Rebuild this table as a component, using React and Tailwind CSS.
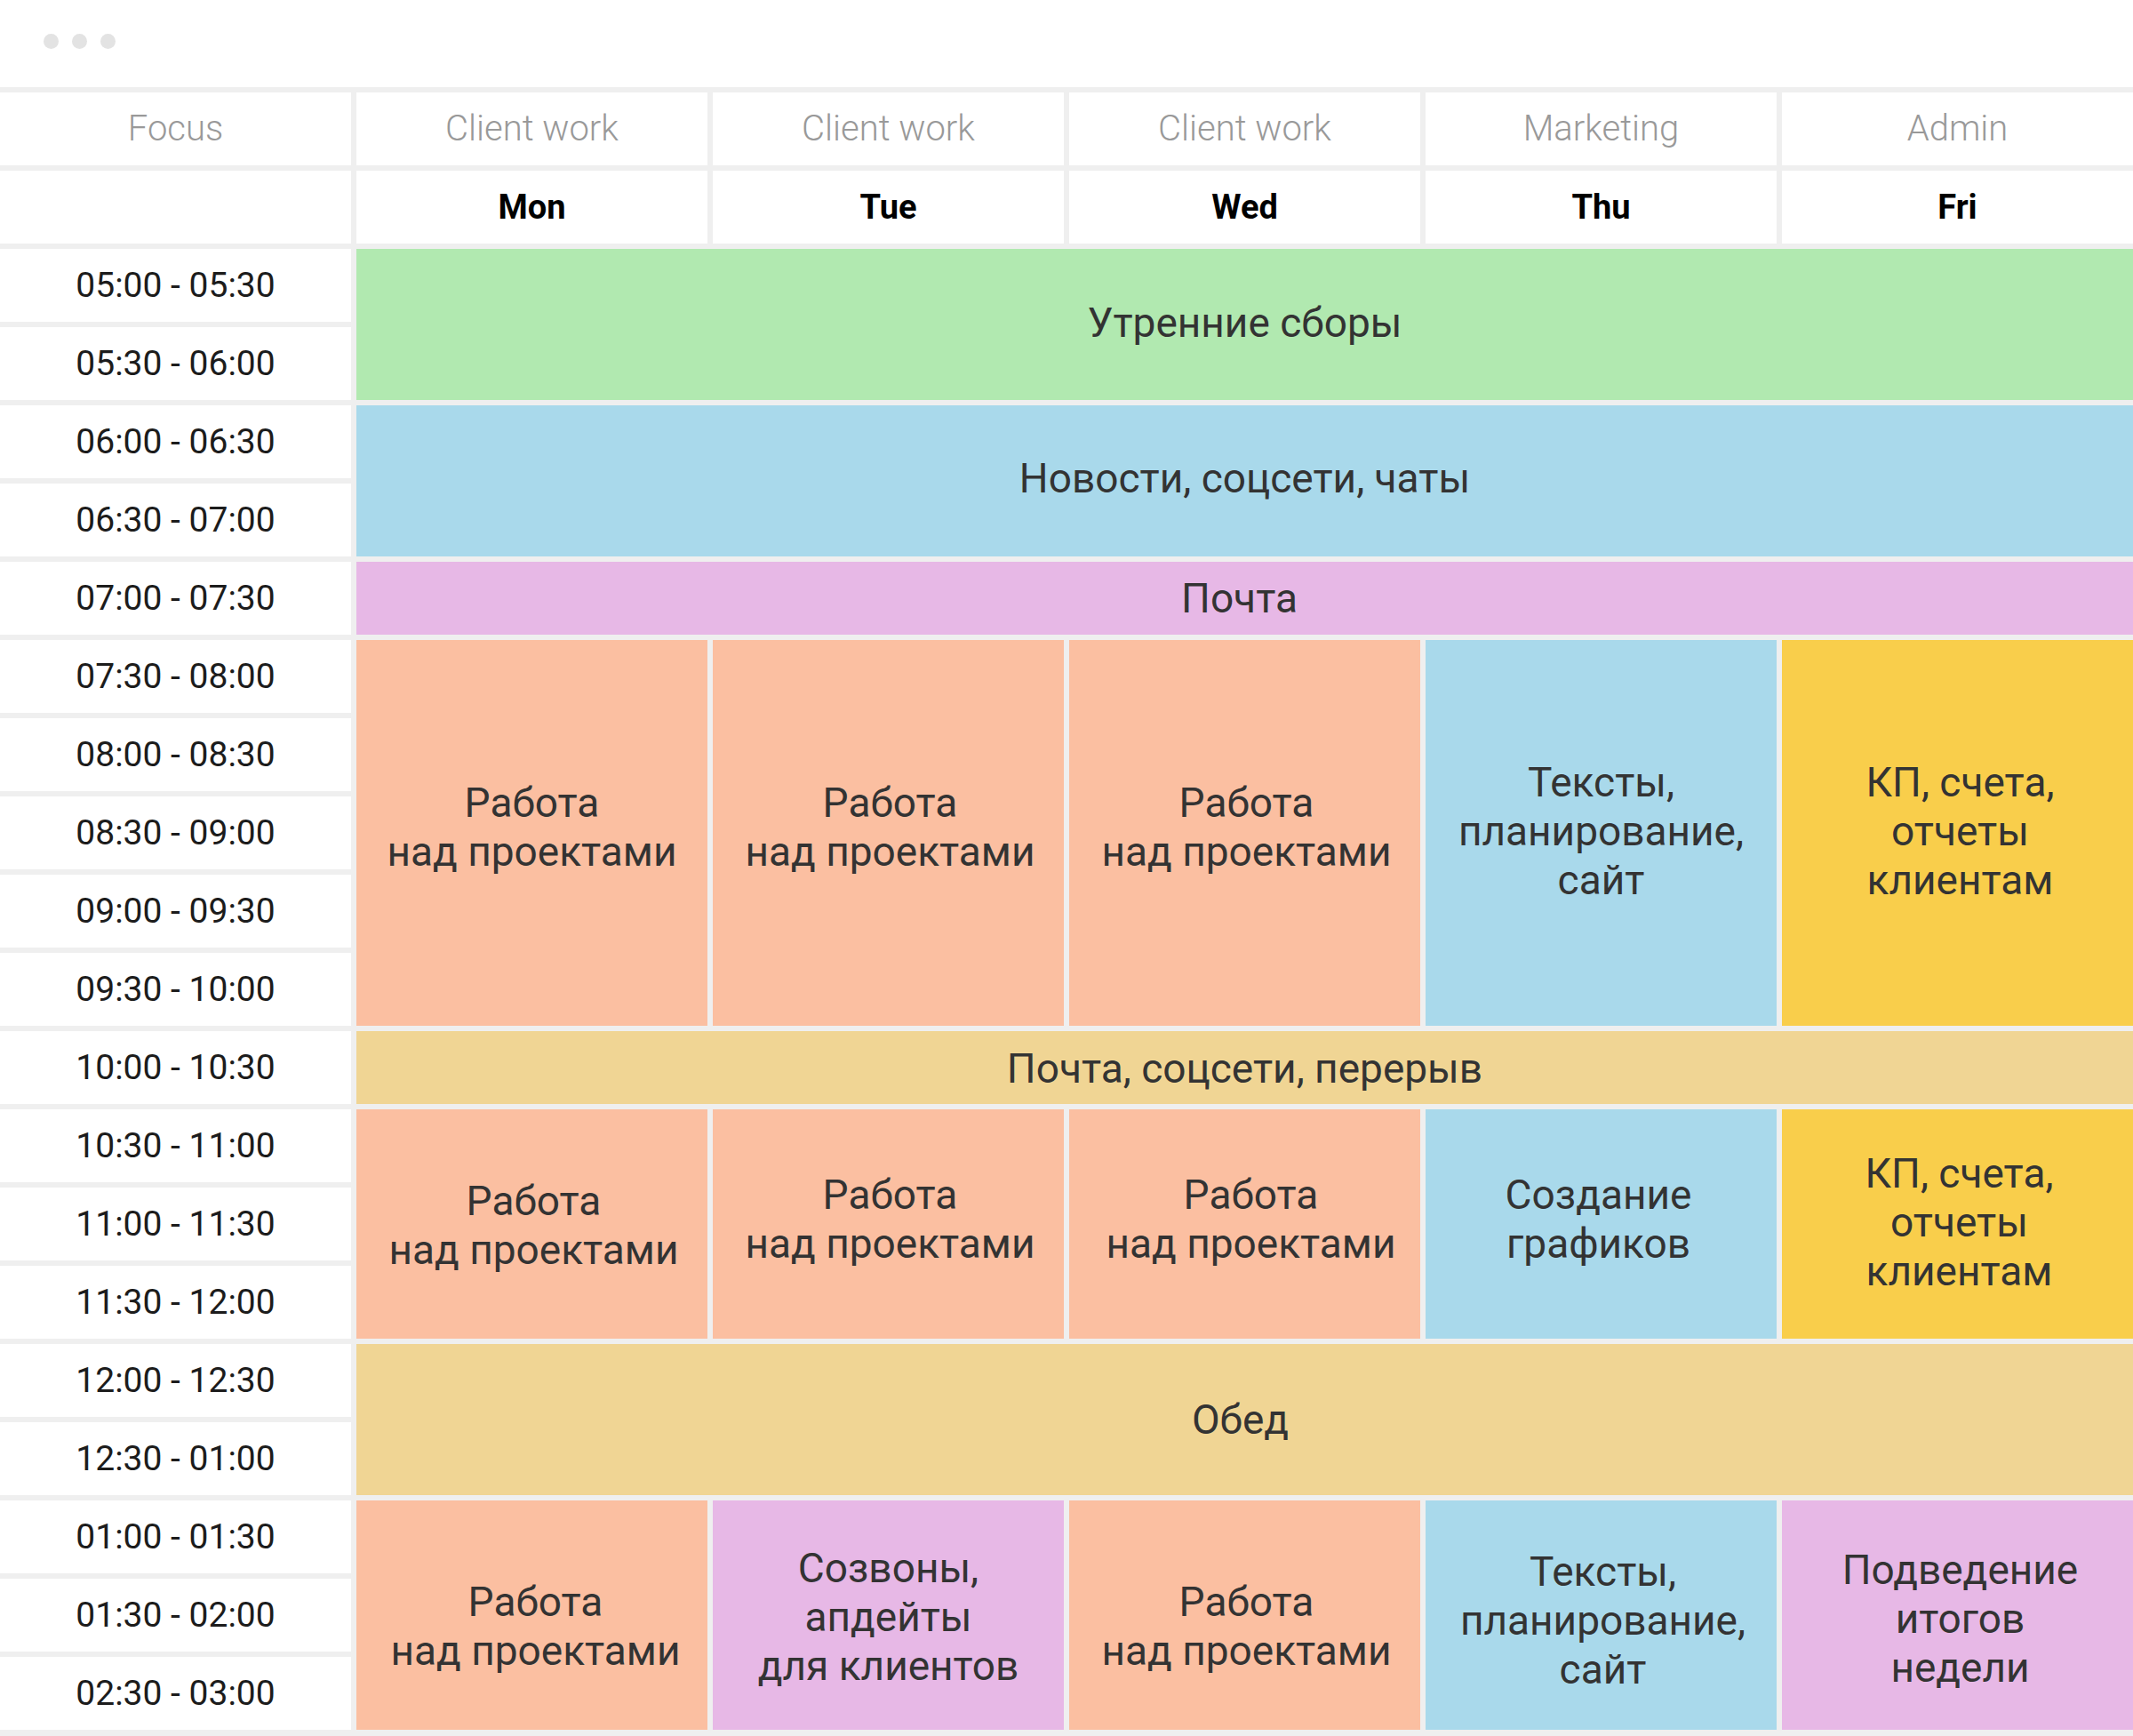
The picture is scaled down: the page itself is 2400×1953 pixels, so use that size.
import React from 'react';

const categories = ['Focus', 'Client work', 'Client work', 'Client work', 'Marketing', 'Admin'];
const days = ['', 'Mon', 'Tue', 'Wed', 'Thu', 'Fri'];

const times = [
    ['05:00 - 05:30', 'row-start-3'],
    ['05:30 - 06:00', 'row-start-4'],
    ['06:00 - 06:30', 'row-start-5'],
    ['06:30 - 07:00', 'row-start-6'],
    ['07:00 - 07:30', 'row-start-7'],
    ['07:30 - 08:00', 'row-start-8'],
    ['08:00 - 08:30', 'row-start-9'],
    ['08:30 - 09:00', 'row-start-10'],
    ['09:00 - 09:30', 'row-start-11'],
    ['09:30 - 10:00', 'row-start-12'],
    ['10:00 - 10:30', 'row-start-13'],
    ['10:30 - 11:00', 'row-start-14'],
    ['11:00 - 11:30', 'row-start-15'],
    ['11:30 - 12:00', 'row-start-16'],
    ['12:00 - 12:30', 'row-start-17'],
    ['12:30 - 01:00', 'row-start-18'],
    ['01:00 - 01:30', 'row-start-19'],
    ['01:30 - 02:00', 'row-start-20'],
    ['02:30 - 03:00', 'row-start-21'],
];

const green = 'bg-[#b1e9b0]';
const blue = 'bg-[#a9d9eb]';
const pink = 'bg-[#e7b8e6]';
const peach = 'bg-[#fbbfa1]';
const yellow = 'bg-[#f9ce4b]';
const tan = 'bg-[#f0d594]';

const work = ['Работа', 'над проектами'];
const texts = ['Тексты,', 'планирование,', 'сайт'];
const kp = ['КП, счета,', 'отчеты', 'клиентам'];

// the original blocks are not all perfectly centred, pad a few to follow it
const events = [
    { lines: ['Утренние сборы'], pos: 'row-start-3 row-span-2 col-start-2 col-span-5', color: green, pad: 'pb-[4px]' },
    { lines: ['Новости, соцсети, чаты'], pos: 'row-start-5 row-span-2 col-start-2 col-span-5', color: blue, pad: 'pb-[6px]' },
    { lines: ['Почта'], pos: 'row-start-7 col-start-2 col-span-5', color: pink, pad: 'pr-[12px]' },

    { lines: work, pos: 'row-start-8 row-span-5 col-start-2', color: peach, pad: 'pb-[12px]' },
    { lines: work, pos: 'row-start-8 row-span-5 col-start-3', color: peach, pad: 'pb-[12px] pl-[4px]' },
    { lines: work, pos: 'row-start-8 row-span-5 col-start-4', color: peach, pad: 'pb-[12px] pl-[4px]' },
    { lines: texts, pos: 'row-start-8 row-span-5 col-start-5', color: blue, pad: 'pb-[4px]' },
    { lines: kp, pos: 'row-start-8 row-span-5 col-start-6', color: yellow, pad: 'pb-[4px] pl-[6px]' },

    { lines: ['Почта, соцсети, перерыв'], pos: 'row-start-13 col-start-2 col-span-5', color: tan, pad: 'pt-[2px]' },

    { lines: work, pos: 'row-start-14 row-span-3 col-start-2', color: peach, pad: 'pt-[4px] pl-[4px]' },
    { lines: work, pos: 'row-start-14 row-span-3 col-start-3', color: peach, pad: 'pb-[10px] pl-[4px]' },
    { lines: work, pos: 'row-start-14 row-span-3 col-start-4', color: peach, pad: 'pb-[10px] pl-[14px]' },
    { lines: ['Создание', 'графиков'], pos: 'row-start-14 row-span-3 col-start-5', color: blue, pad: 'pb-[10px] pr-[6px]' },
    { lines: kp, pos: 'row-start-14 row-span-3 col-start-6', color: yellow, pad: 'pb-[4px] pl-[4px]' },

    { lines: ['Обед'], pos: 'row-start-17 row-span-2 col-start-2 col-span-5', color: tan, pad: 'pr-[10px]' },

    { lines: work, pos: 'row-start-19 row-span-3 col-start-2', color: peach, pad: 'pt-[26px] pl-[8px]' },
    { lines: ['Созвоны,', 'апдейты', 'для клиентов'], pos: 'row-start-19 row-span-3 col-start-3', color: pink, pad: 'pt-[4px]' },
    { lines: work, pos: 'row-start-19 row-span-3 col-start-4', color: peach, pad: 'pt-[26px] pl-[4px]' },
    { lines: texts, pos: 'row-start-19 row-span-3 col-start-5', color: blue, pad: 'pt-[12px] pl-[4px]' },
    { lines: ['Подведение', 'итогов', 'недели'], pos: 'row-start-19 row-span-3 col-start-6', color: pink, pad: 'pt-[8px] pl-[6px]' },
];

export default function App() {
    return (
        <div className="w-[2400px] h-[1953px] bg-white font-[Roboto,sans-serif] overflow-hidden">
            {/* window bar */}
            <div className="h-[98px] flex items-center gap-[15px] pl-[49px] pb-[6px]">
                <span className="w-[17px] h-[17px] rounded-full bg-[#e3e3e3]" />
                <span className="w-[17px] h-[17px] rounded-full bg-[#e3e3e3]" />
                <span className="w-[17px] h-[17px] rounded-full bg-[#e3e3e3]" />
            </div>

            <div className="bg-[#efefef] pt-[6px] pb-[7px]">
                <div className="grid grid-cols-6 auto-rows-[82px] gap-[6px]">
                    {categories.map((c, i) => (
                        <div key={'c' + i} className="row-start-1 bg-white flex items-center justify-center text-[40px] font-light text-[#999999]">
                            {c}
                        </div>
                    ))}
                    {days.map((d, i) => (
                        <div key={'d' + i} className="row-start-2 bg-white flex items-center justify-center text-[38px] font-bold text-black">
                            {d}
                        </div>
                    ))}
                    {times.map(([t, row]) => (
                        <div key={t} className={`${row} col-start-1 bg-white flex items-center justify-center text-[39px] text-[#1c1c1c]`}>
                            {t}
                        </div>
                    ))}
                    {events.map((e, i) => (
                        <div key={'e' + i} className={`${e.pos} ${e.color} ${e.pad} flex flex-col items-center justify-center text-center text-[46px] leading-[55px] text-[#333333]`}>
                            {e.lines.map((l, j) => (
                                <span key={j}>{l}</span>
                            ))}
                        </div>
                    ))}
                </div>
            </div>
        </div>
    );
}
